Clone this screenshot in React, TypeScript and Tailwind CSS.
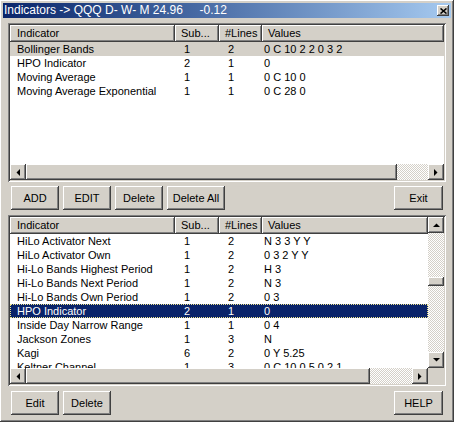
import React from "react";

type Row = { name: string; sub: string; lines: string; values: string };

const raised =
  "shadow-[inset_-1px_-1px_#404040,inset_1px_1px_#ffffff,inset_-2px_-2px_#808080,inset_2px_2px_#d4d0c8]";
const sunken =
  "shadow-[inset_1px_1px_#808080,inset_-1px_-1px_#ffffff,inset_2px_2px_#404040,inset_-2px_-2px_#d4d0c8]";
const checker =
  "bg-[repeating-conic-gradient(#d4d0c8_0%_25%,#ffffff_0%_50%)] bg-[length:2px_2px]";

const topRows: Row[] = [
  { name: "Bollinger Bands", sub: "1", lines: "2", values: "0 C 10 2 2 0 3 2" },
  { name: "HPO Indicator", sub: "2", lines: "1", values: "0" },
  { name: "Moving Average", sub: "1", lines: "1", values: "0 C 10 0" },
  { name: "Moving Average Exponential", sub: "1", lines: "1", values: "0 C 28 0" },
];

const bottomRows: Row[] = [
  { name: "HiLo Activator Next", sub: "1", lines: "2", values: "N 3 3 Y Y" },
  { name: "HiLo Activator Own", sub: "1", lines: "2", values: "0 3 2 Y Y" },
  { name: "Hi-Lo Bands Highest Period", sub: "1", lines: "2", values: "H 3" },
  { name: "Hi-Lo Bands Next Period", sub: "1", lines: "2", values: "N 3" },
  { name: "Hi-Lo Bands Own Period", sub: "1", lines: "2", values: "0 3" },
  { name: "HPO Indicator", sub: "2", lines: "1", values: "0" },
  { name: "Inside Day Narrow Range", sub: "1", lines: "1", values: "0 4" },
  { name: "Jackson Zones", sub: "1", lines: "3", values: "N" },
  { name: "Kagi", sub: "6", lines: "2", values: "0 Y 5.25" },
  { name: "Keltner Channel", sub: "1", lines: "3", values: "0 C 10 0 5 0 2 1" },
];

const Arrow = ({ dir }: { dir: "up" | "down" | "left" | "right" }) => {
  const pts = {
    up: "0,4 7,4 3.5,0.5",
    down: "0,0 7,0 3.5,3.5",
    left: "4,0 4,7 0.5,3.5",
    right: "0,0 0,7 3.5,3.5",
  }[dir];
  const size = dir === "up" || dir === "down" ? { w: 7, h: 4 } : { w: 4, h: 7 };
  return (
    <div className={`w-[16px] h-[16px] shrink-0 bg-[#d4d0c8] flex items-center justify-center ${raised}`}>
      <svg width={size.w} height={size.h} viewBox={`0 0 ${size.w} ${size.h}`}>
        <polygon points={pts} fill="#000" />
      </svg>
    </div>
  );
};

const HScroll = ({ thumb }: { thumb: string }) => (
  <div className="flex h-[16px] shrink-0">
    <Arrow dir="left" />
    <div className={`${thumb} h-[16px] bg-[#d4d0c8] ${raised}`} />
    <div className={`flex-1 ${checker}`} />
    <Arrow dir="right" />
  </div>
);

const Header = () => {
  const cell = "h-[17px] leading-[17px] pl-[6px] bg-[#d4d0c8] shadow-[inset_-1px_-1px_#404040,inset_1px_1px_#ffffff,inset_-2px_-2px_#808080] whitespace-nowrap overflow-hidden";
  return (
    <div className="flex shrink-0">
      <div className={`w-[165px] pl-[7px] ${cell}`}>Indicator</div>
      <div className={`w-[44px] ${cell}`}>Sub...</div>
      <div className={`w-[43px] ${cell}`}>#Lines</div>
      <div className={`flex-1 ${cell}`}>Values</div>
    </div>
  );
};

const ListRow = ({ row, mode }: { row: Row; mode?: "inactive" | "active" }) => {
  const bg =
    mode === "inactive"
      ? "bg-[#d4d0c8] text-black"
      : mode === "active"
      ? "bg-[#0a246a] text-white outline-1 outline-dotted outline-[#f0e68c] -outline-offset-1"
      : "text-black";
  return (
    <div className={`flex h-[14px] leading-[14px] whitespace-nowrap ${bg}`}>
      <div className="w-[165px] pl-[7px] overflow-hidden">{row.name}</div>
      <div className="w-[44px] pl-[9px]">{row.sub}</div>
      <div className="w-[43px] pl-[9px]">{row.lines}</div>
      <div className="flex-1 pl-[2px] whitespace-pre">{row.values}</div>
    </div>
  );
};

const Button = ({ label, w }: { label: string; w: string }) => (
  <button className={`${w} h-[24px] bg-[#d4d0c8] text-black text-[11px] ${raised}`}>{label}</button>
);

export default function App() {
  return (
    <div className="w-[454px] h-[422px] bg-[#d4d0c8] font-['Liberation_Sans',Arial,sans-serif] text-[11px] text-black select-none">
      <div className={`w-full h-full p-[3px] flex flex-col ${raised}`}>
        {/* title bar */}
        <div className="h-[15px] shrink-0 flex items-center bg-gradient-to-r from-[#0a246a] to-[#a6caf0] pl-[1px] pr-[2px]">
          <span className="flex-1 text-white text-[12px] leading-[15px] whitespace-pre">
            Indicators -&gt; QQQ D- W- M 24.96{"     "}-0.12
          </span>
          <div className={`w-[12px] h-[11px] bg-[#d4d0c8] flex items-center justify-center ${raised}`}>
            <svg width="7" height="6" viewBox="0 0 7 6">
              <path d="M0.5 0.5 L6.5 5.5 M6.5 0.5 L0.5 5.5" stroke="#000" strokeWidth="1.6" />
            </svg>
          </div>
        </div>

        <div className="flex-1 flex flex-col px-[5px] pt-[5px]">
          {/* top list */}
          <div className={`h-[159px] p-[2px] bg-white flex flex-col ${sunken}`}>
            <Header />
            <div className="flex-1 overflow-hidden">
              {topRows.map((r, i) => (
                <ListRow key={r.name} row={r} mode={i === 0 ? "inactive" : undefined} />
              ))}
            </div>
            <HScroll thumb="w-[371px]" />
          </div>

          <div className="flex items-center h-[24px] mt-[4px] px-[3px] gap-[4px]">
            <Button label="ADD" w="w-[48px]" />
            <Button label="EDIT" w="w-[48px]" />
            <Button label="Delete" w="w-[48px]" />
            <Button label="Delete All" w="w-[58px]" />
            <div className="flex-1" />
            <Button label="Exit" w="w-[49px]" />
          </div>

          {/* bottom list */}
          <div className={`h-[171px] mt-[5px] p-[2px] bg-white grid grid-cols-[1fr_16px] grid-rows-[1fr_16px] ${sunken}`}>
            <div className="flex flex-col overflow-hidden">
              <Header />
              <div className="flex-1 overflow-hidden">
                {bottomRows.map((r, i) => (
                  <ListRow key={r.name + i} row={r} mode={i === 5 ? "active" : undefined} />
                ))}
              </div>
            </div>
            <div className="flex flex-col">
              <Arrow dir="up" />
              <div className={`flex-1 ${checker} flex flex-col`}>
                <div className="h-[44px]" />
                <div className={`h-[9px] bg-[#d4d0c8] ${raised}`} />
              </div>
              <Arrow dir="down" />
            </div>
            <HScroll thumb="w-[344px]" />
            <div className="bg-[#d4d0c8]" />
          </div>

          <div className="flex items-center h-[24px] mt-[5px] px-[3px] gap-[4px]">
            <Button label="Edit" w="w-[48px]" />
            <Button label="Delete" w="w-[48px]" />
            <div className="flex-1" />
            <Button label="HELP" w="w-[49px]" />
          </div>
        </div>
      </div>
    </div>
  );
}
